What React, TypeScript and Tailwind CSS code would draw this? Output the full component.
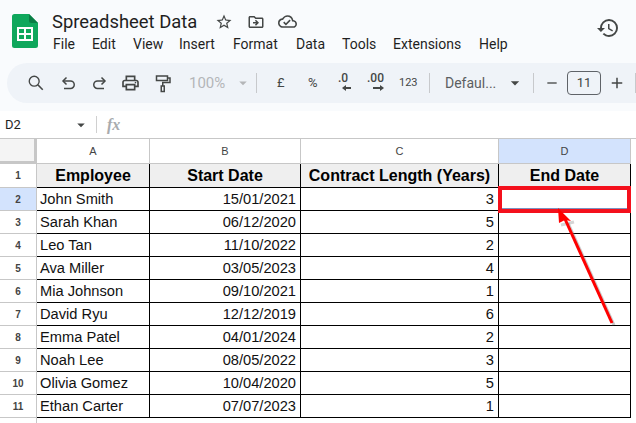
import React from "react";
import { MdOutlinePrint, MdStarBorder, MdOutlineDriveFileMove, MdOutlineCloudDone, MdHistory, MdRemove, MdAdd, MdArrowDropDown } from "react-icons/md";

const rows: [string, string, string][] = [
  ["John Smith", "15/01/2021", "3"],
  ["Sarah Khan", "06/12/2020", "5"],
  ["Leo Tan", "11/10/2022", "2"],
  ["Ava Miller", "03/05/2023", "4"],
  ["Mia Johnson", "09/10/2021", "1"],
  ["David Ryu", "12/12/2019", "6"],
  ["Emma Patel", "04/01/2024", "2"],
  ["Noah Lee", "08/05/2022", "3"],
  ["Olivia Gomez", "10/04/2020", "5"],
  ["Ethan Carter", "07/07/2023", "1"],
];
const menus = ["File", "Edit", "View", "Insert", "Format", "Data", "Tools", "Extensions", "Help"];
const menuGaps = ["w-[39px]", "w-[41px]", "w-[46px]", "w-[54px]", "w-[63px]", "w-[46px]", "w-[51px]", "w-[86px]", "w-[40px]"];

function Logo() {
  return (
    <svg width="26" height="34" viewBox="0 0 26 34" className="shrink-0">
      <path d="M2.5 0H17l9 9v22.5a2.5 2.5 0 0 1-2.5 2.5h-21A2.5 2.5 0 0 1 0 31.5V2.5A2.5 2.5 0 0 1 2.5 0z" fill="#0fa75c" />
      <path d="M17 0l9 9h-6.5A2.5 2.5 0 0 1 17 6.5z" fill="#0a7d44" />
      <path d="M5 13h16v14H5z" fill="#fff" />
      <path d="M7 15h5v4H7zM14 15h5v4h-5zM7 21h5v4H7zM14 21h5v4h-5z" fill="#0fa75c" />
    </svg>
  );
}

function Sep() {
  return <div className="mx-[3px] h-[20px] w-px shrink-0 bg-[#c7c9cc]" />;
}

function Stroke({ children, w = 21, s = 20 }: { children: React.ReactNode; w?: number; s?: number }) {
  return (
    <span className="flex shrink-0 justify-center" style={{ width: w }}>
      <svg width={s} height={s} viewBox="0 0 20 20" fill="none" stroke="#444746" strokeWidth="1.5">
        {children}
      </svg>
    </span>
  );
}

function Toolbar() {
  return (
    <div className="ml-[7px] flex h-[40px] items-center rounded-l-[20px] bg-[#eff3f8] pl-[18px] text-[#444746]" style={{ fontFamily: "Roboto, sans-serif" }}>
      <Stroke s={18}><circle cx="8" cy="8" r="5.5" /><path d="M12 12l5.5 5.5" strokeWidth="1.8" /></Stroke>
      <div className="w-[11px] shrink-0" />
      <Stroke><path d="M8.5 4.5L5 8l3.5 3.5" /><path d="M5 8h7.5a3.75 3.75 0 0 1 0 7.5H6" /></Stroke>
      <div className="w-[11px] shrink-0" />
      <Stroke><path d="M11.5 4.5L15 8l-3.5 3.5" /><path d="M15 8H7.5a3.75 3.75 0 0 0 0 7.5H14" /></Stroke>
      <div className="w-[10px] shrink-0" />
      <MdOutlinePrint size={20} className="w-[21px] shrink-0" />
      <div className="w-[11px] shrink-0" />
      <Stroke><path d="M3.5 3h11v4.5h-11z" /><path d="M14.5 5h2.5v4.5H9.75v3.5" /><path d="M8.25 13h3v5.5h-3z" /></Stroke>
      <div className="w-[16px] shrink-0" />
      <span className="w-[40px] shrink-0 text-[15px] text-[#b4b6b8]">100%</span>
      <MdArrowDropDown size={18} className="ml-[5px] w-[18px] shrink-0 text-[#b4b6b8]" />
      <div className="w-[1px] shrink-0" />
      <Sep />
      <span className="ml-[17px] w-[20px] shrink-0 text-[13px]">£</span>
      <span className="ml-[11px] w-[20px] shrink-0 text-[13px]">%</span>
      <div className="relative ml-[8px] h-[24px] w-[20px] shrink-0 text-[12px] font-medium leading-[14px]">
        <span className="absolute left-[2px] top-0">.0</span>
        <span className="absolute left-[8px] top-[16px] h-[2px] w-[7px] bg-[#444746]" />
        <span className="absolute left-[6px] top-[14px] text-[0px]"><svg width="5" height="6" viewBox="0 0 5 6"><path d="M4 0L0 3l4 3z" fill="#444746" /></svg></span>
      </div>
      <div className="relative ml-[11px] h-[24px] w-[24px] shrink-0 text-[12px] font-medium leading-[14px]">
        <span className="absolute left-0 top-0">.00</span>
        <span className="absolute left-[6px] top-[16px] h-[2px] w-[7px] bg-[#444746]" />
        <span className="absolute left-[12px] top-[14px] text-[0px]"><svg width="5" height="6" viewBox="0 0 5 6"><path d="M1 0l4 3-4 3z" fill="#444746" /></svg></span>
      </div>
      <span className="ml-[8px] w-[20px] shrink-0 text-[11px]">123</span>
      <div className="w-[7px] shrink-0" />
      <Sep />
      <span className="ml-[12px] w-[56px] shrink-0 text-[14px] text-[#5b5e61]">Defaul...</span>
      <MdArrowDropDown size={20} className="ml-[4px] w-[20px] shrink-0" />
      <div className="w-[5px] shrink-0" />
      <Sep />
      <MdRemove size={16} className="ml-[7px] w-[16px] shrink-0" />
      <div className="ml-[7px] flex h-[24px] w-[34px] shrink-0 items-center justify-center rounded-[4px] border border-[#5f6368] text-[13px]">11</div>
      <MdAdd size={18} className="ml-[7px] w-[18px] shrink-0" />
      <div className="w-[6px] shrink-0" />
      <Sep />
    </div>
  );
}

function Sheet() {
  const lab = "flex items-center justify-center border-r border-b border-[#c7c7c7] text-[11px] text-[#444]";
  const num = "flex items-center justify-center border-r border-b border-[#c7c7c7] text-[10px] font-bold text-[#444]";
  const cell = "flex h-[23px] items-center border-r border-b border-black pl-[3px] pr-[4px] text-[14.67px] leading-none text-[#111]";
  const head = "flex h-[24px] items-center justify-center border-r border-b border-black bg-[#efefef] text-[16px] font-bold leading-none text-black";
  return (
    <div className="relative grid w-[631px] grid-cols-[37px_113px_151px_198px_132px] grid-rows-[25px_24px_repeat(10,23px)]" style={{ fontFamily: '"Liberation Sans", Arial, sans-serif' }}>
      <div className="border-r-[3px] border-b-[3px] border-[#c7c7c7] bg-[#f4f4f4]" />
      <div className={lab}>A</div>
      <div className={lab}>B</div>
      <div className={lab}>C</div>
      <div className={`${lab} bg-[#d3e3fd] text-[#0b2f66]`}>D</div>
      <div className={num}>1</div>
      <div className={head}>Employee</div>
      <div className={head}>Start Date</div>
      <div className={head}>Contract Length (Years)</div>
      <div className={head}>End Date</div>
      {rows.map((r, i) => (
        <React.Fragment key={r[0]}>
          <div className={`${num} ${i === 0 ? "bg-[#d3e3fd] text-[#0b2f66]" : ""}`}>{i + 2}</div>
          <div className={cell}>{r[0]}</div>
          <div className={`${cell} justify-end`}>{r[1]}</div>
          <div className={`${cell} justify-end`}>{r[2]}</div>
          <div className={cell} />
        </React.Fragment>
      ))}
      <div className="pointer-events-none absolute left-[498px] top-[47px] h-[27px] w-[133px] border-4 border-[#f4101c] shadow-[inset_0_-1px_0_rgba(40,70,150,0.6)]" />
    </div>
  );
}

export default function App() {
  return (
    <div className="relative h-[423px] w-[636px] overflow-hidden bg-white">
      <div className="h-[111px] bg-[#f9fbfd]">
        <div className="flex h-[63px] pl-[12px] pt-[14px]" style={{ fontFamily: "Roboto, sans-serif" }}>
          <Logo />
          <div className="ml-[14px] flex-1">
            <div className="-mt-[4px] flex h-[23px] items-center">
              <span className="w-[163px] text-[18.4px] text-[#1f1f1f]">Spreadsheet Data</span>
              <MdStarBorder size={18} className="text-[#444746]" />
              <MdOutlineDriveFileMove size={18} className="ml-[14px] text-[#444746]" />
              <MdOutlineCloudDone size={19} className="ml-[13px] text-[#444746]" />
            </div>
            <div className="mt-[2px] flex h-[18px] items-center pl-[1px] text-[14px] text-[#1f1f1f]">
              {menus.map((m, i) => (
                <span key={m} className={menuGaps[i]}>{m}</span>
              ))}
            </div>
          </div>
          <MdHistory size={24} className="mr-[16px] mt-[2px] text-[#444746]" />
        </div>
        <Toolbar />
      </div>
      <div className="flex h-[28px] items-center border-b border-[#c7c7c7] text-[#444]" style={{ fontFamily: "Roboto, sans-serif" }}>
        <span className="ml-[5px] w-[67px] text-[13px] text-[#1f1f1f]">D2</span>
        <MdArrowDropDown size={18} className="w-[18px] text-[#444746]" />
        <div className="ml-[6px] h-[17px] w-px bg-[#d0d0d0]" />
        <span className="ml-[10px] text-[16px] font-bold italic text-[#a8abae]" style={{ fontFamily: '"Liberation Serif", serif' }}>fx</span>
      </div>
      <Sheet />
      <div className="flex h-[6px]">
        <div className="h-full w-[37px] border-r border-[#c7c7c7]" />
      </div>
      <svg className="pointer-events-none absolute left-0 top-0" width="636" height="423" viewBox="0 0 636 423">
        <path d="M614 325L568 223" stroke="#888" strokeOpacity="0.45" strokeWidth="3" />
        <path d="M574 222L561 225" stroke="#888" strokeOpacity="0.35" strokeWidth="3" />
        <path d="M612 323L565 219" stroke="#ff0000" strokeWidth="3" fill="none" />
        <path d="M558 208L571 221L565 220L559 223z" fill="#ff0000" />
      </svg>
    </div>
  );
}
